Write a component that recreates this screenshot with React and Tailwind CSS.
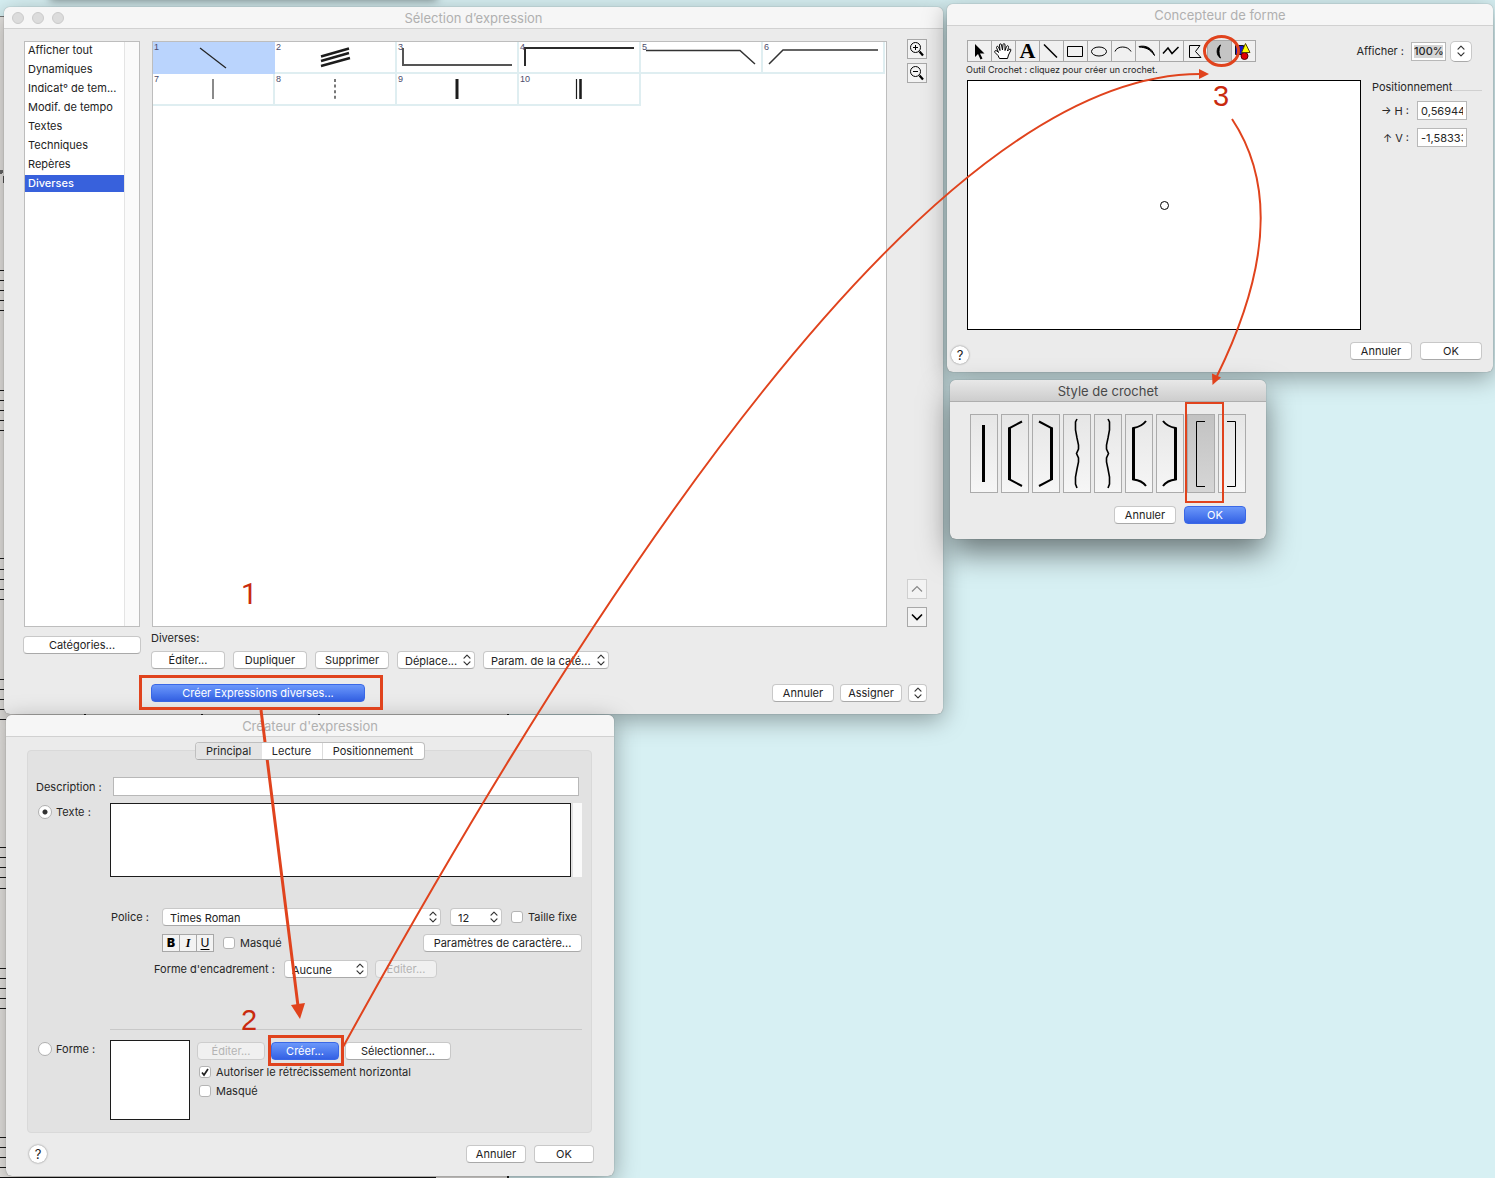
import { useState } from 'react';

const categories = [
  'Afficher tout',
  'Dynamiques',
  'Indicat° de tem...',
  'Modif. de tempo',
  'Textes',
  'Techniques',
  'Repères',
  'Diverses',
];

const expressions = [
  { id: 1, shape: <path d="M47 6 73 26" stroke="#222" strokeWidth="1.2" /> },
  { id: 2, shape: <path d="M46 14.5 74 6.5M46 19 74 11M46 24 75 16" stroke="#1c1c1c" strokeWidth="2.4" /> },
  { id: 3, shape: <path d="M6 6V23H115" stroke="#555" strokeWidth="2" /> },
  { id: 4, shape: <path d="M6 24V6H115" stroke="#2b2b2b" strokeWidth="2" /> },
  { id: 5, shape: <path d="M5 8.5H99L114 22" stroke="#333" strokeWidth="1.5" /> },
  { id: 6, shape: <path d="M6 22 20 8H115" stroke="#333" strokeWidth="1.5" /> },
  { id: 7, shape: <path d="M60 5V25" stroke="#8a8a8a" strokeWidth="2" /> },
  { id: 8, shape: <path d="M60 5V25" stroke="#777" strokeWidth="2" strokeDasharray="3 2.6" /> },
  { id: 9, shape: <path d="M60 5V25" stroke="#1c1c1c" strokeWidth="3" /> },
  { id: 10, shape: <path d="M57.5 5V25M61.5 5V25" stroke="#1c1c1c" strokeWidth="1.2" /> , extra: 61.5 },
];

const tools = [
  {
    name: 'Sélection',
    icon: <path d="M8 4v13l3-3 2.5 5.5 2-1-2.5-5h4.5z" fill="#000" />,
  },
  {
    name: 'Déplacement',
    icon: (
      <path
        d="M8.5 18.5 7 15.500 4 12.500C3 11 4.500 10 6 11L7.500 12.500 5.500 7.500C5.500 6 7 6 7.500 7L9 10.500 8.500 5C8.500 3.500 10.500 3.500 10.500 5L11.500 10 12 4.500C12.500 3 14 3.500 14 5V10.500L15.500 6.500C16.500 5 18 6 17.500 7.500L16.500 11 18 9.500C19.500 8.500 20.500 9.500 19.500 11L17.500 15 16.500 18.500Z"
        fill="#fff"
        stroke="#000"
      />
    ),
  },
  { name: 'Texte', letter: 'A' },
  { name: 'Ligne', icon: <path d="M5 4.500 18 17.500" stroke="#000" strokeWidth="1.5" /> },
  { name: 'Rectangle', icon: <path d="M4.500 6.500h15v10h-15z" stroke="#000" /> },
  { name: 'Ellipse', icon: <ellipse cx="12" cy="11.500" rx="7.500" ry="4.500" stroke="#000" /> },
  { name: 'Arc', icon: <path d="M4 11.500C6 5.500 17 5.500 20 11.500" stroke="#000" /> },
  { name: 'Liaison', icon: <path d="M4 6.500C11 5 17 8 19.500 15.500C15 9 11 7.500 4 7Z" fill="#000" stroke="#000" /> },
  { name: 'Polyligne', icon: <path d="M4 13.500 9 8 13 13.500 19.500 7" stroke="#000" strokeWidth="1.500" /> },
  { name: 'Polygone', icon: <path d="M6.500 5.500H17L12.500 11.500 18 17.500H6.500Z" stroke="#000" /> },
  { name: 'Crochet', icon: <path d="M13.500 5C9 8 9 15 13.500 18C11.500 14 11.500 9 13.500 5Z" fill="#000" stroke="#000" /> },
  {
    name: 'Objets',
    icon: (
      <>
        <path d="M4.500 5.500h8v9h-8z" fill="#1414d2" stroke="#111" />
        <ellipse cx="13.500" cy="16" rx="3.500" ry="3.500" fill="#e00000" stroke="#500" />
        <path d="M14.500 3.500 19 12.500H10.500Z" fill="#ff0" stroke="#554400" />
      </>
    ),
  },
];

const brace = 'M14 5 12.500 8 12.500 16 14 24 15.500 31V35L13.500 39.500 15.500 44V48L14 55 12.500 63V70L14 74';

const brackets = [
  { name: 'Trait', icon: <path d="M13.500 11V68" strokeWidth="3" /> },
  { name: 'Crochet biseauté gauche', icon: <path d="M21 7.500 8.500 14V65.500L21 72" strokeWidth="2" />, bar: 8.5 },
  { name: 'Crochet biseauté droit', icon: <path d="M7 7.500 19.500 14V65.500L7 72" strokeWidth="2" />, bar: 19.5 },
  { name: 'Accolade gauche', icon: <path d={brace} strokeWidth="1.600" /> },
  { name: 'Accolade droite', icon: <path d={brace} strokeWidth="1.600" transform="translate(28 0) scale(-1 1)" /> },
  { name: 'Crochet courbe gauche', icon: <path d="M21 7C18 11 14 13 8.500 14V65.500C14 66 18 68 21 72" strokeWidth="2" />, bar: 8.5 },
  { name: 'Crochet courbe droit', icon: <path d="M7 7C10 11 14 13 19.500 14V65.500C14 66 10 68 7 72" strokeWidth="2" />, bar: 19.5 },
  { name: 'Crochet droit ouvrant', icon: <path d="M18 7.500H9.500V72.500H18" strokeWidth="1" /> },
  { name: 'Crochet droit fermant', icon: <path d="M9 7.500H17.500V72.500H9" strokeWidth="1" /> },
];

const staffLines = [
  270, 280, 290, 300, 310, 390, 400, 410, 420, 430, 558, 569, 579, 589, 599, 679, 689, 699, 709, 719,
  847, 857, 867, 877, 888, 968, 978, 988, 998, 1008, 1137, 1147, 1157, 1167,
];

const Window = ({ title, lights, active, className, children }) => (
  <section
    aria-label={title}
    className={`absolute flex flex-col rounded-md bg-[#ebebeb] ${
      active
        ? 'shadow-[0_0_1px_rgba(0,0,0,0.5),0_14px_30px_rgba(0,0,0,0.5)]'
        : 'shadow-[0_0_1px_rgba(0,0,0,0.5),0_6px_24px_rgba(0,0,0,0.35)]'
    } ${className}`}
  >
    <header
      className={`relative flex h-[22px] items-center justify-center rounded-t-md border-b text-[13px] leading-4 ${
        active
          ? 'border-[#aeaeae] bg-gradient-to-b from-[#e8e8e8] to-[#cdcdcd] text-[#484848]'
          : 'border-[#d1d1d1] bg-[#f6f6f6] text-[#b0b0b0]'
      }`}
    >
      {lights && (
        <div className="absolute left-2 flex gap-2">
          {['Fermer', 'Réduire', 'Agrandir'].map((label) => (
            <button key={label} aria-label={label} className="size-3 rounded-full border border-[#cbcbcb] bg-[#dcdcdc]" />
          ))}
        </div>
      )}
      <h2>{title}</h2>
    </header>
    {children}
  </section>
);

const PushButton = ({ children, primary, dimmed, className }) => {
  let look = 'border-[#c8c8c8] border-b-[#a9a9a9] bg-white text-[#222]';
  if (primary) look = 'border-[#3a68e6] bg-gradient-to-b from-[#6b97fa] to-[#3460e4] text-white';
  if (dimmed) look = 'border-[#cdcdcd] bg-[#f0f0f0] text-[#b4b4b4]';
  return (
    <button
      disabled={dimmed}
      className={`h-[18px] shrink-0 rounded-sm border text-center leading-4 whitespace-nowrap ${look} ${className}`}
    >
      {children}
    </button>
  );
};

const UpDown = () => (
  <svg width="8" height="12" viewBox="0 0 8 12" fill="none" stroke="#333" strokeWidth="1.200" strokeLinecap="round" strokeLinejoin="round">
    <path d="M1 4.200 4 1.200 7 4.200M1 7.800 4 10.800 7 7.800" />
  </svg>
);

const PopUp = ({ label, id, value, className }) => (
  <div className={`relative shrink-0 ${className}`}>
    <select
      id={id}
      aria-label={label}
      className="block h-[18px] w-full appearance-none rounded-sm border border-[#c8c8c8] border-b-[#a9a9a9] bg-white pt-px pl-[7px] leading-4 text-[#222]"
    >
      <option>{value}</option>
    </select>
    <span className="pointer-events-none absolute top-[3px] right-1">
      <UpDown />
    </span>
  </div>
);

const Check = ({ label, checked = false }) => {
  const [on, setOn] = useState(checked);
  return (
    <label className="flex items-center gap-[5px] leading-4">
      <span className="relative flex size-3">
        <input
          type="checkbox"
          checked={on}
          onChange={() => setOn(!on)}
          className="size-3 appearance-none rounded-[3px] border border-[#b4b4b4] bg-white"
        />
        {on && (
          <svg className="pointer-events-none absolute inset-0" width="12" height="12" fill="none" stroke="#222" strokeWidth="1.700">
            <path d="M3 6.500 5 9 9 3" />
          </svg>
        )}
      </span>
      {label}
    </label>
  );
};

const Radio = ({ label, defaultChecked }) => (
  <label className="flex items-center gap-1 leading-[18px]">
    <input
      type="radio"
      name="kind"
      defaultChecked={defaultChecked}
      className="size-[14px] appearance-none rounded-full border border-[#b0b0b0] bg-white checked:bg-[radial-gradient(circle,#333_2px,#fff_3px)]"
    />
    {label}
  </label>
);

const HelpButton = () => (
  <button
    aria-label="Aide"
    className="size-[18px] rounded-full bg-white text-center text-[13px] leading-[18px] text-[#222] shadow-[0_0_2px_rgba(0,0,0,0.5)]"
  >
    ?
  </button>
);

const SquareButton = ({ label, dimmed, children }) => (
  <button
    aria-label={label}
    disabled={dimmed}
    className={`flex size-5 items-center justify-center border bg-[#f3f3f3] ${dimmed ? 'border-[#cfcfcf]' : 'border-[#a8a8a8]'}`}
  >
    {children}
  </button>
);

const Magnifier = ({ sign }) => (
  <svg width="18" height="18" fill="none" stroke="#000">
    <circle cx="7.500" cy="7.500" r="5" />
    <path d={sign} />
    <path d="M11.500 11.500 15 15.500" strokeWidth="2.200" />
  </svg>
);

const ScoreBackground = () => (
  <svg className="pointer-events-none absolute inset-0 h-full w-full" aria-hidden="true" shapeRendering="crispEdges">
    <rect x="0" y="16" width="508" height="1162" fill="#e9e7e4" />
    <path d="M0 16.500H5" stroke="#777" />
    {staffLines.map((y) => (
      <path key={y} d={`M0 ${y}.500H10`} stroke="#1a1a1a" />
    ))}
    <circle cx="1" cy="172" r="2" fill="#666" />
    <path d="M3.500 176V183" stroke="#555" />
    <path d="M0 1177.500H436" stroke="#111" strokeWidth="1" />
    <path d="M84.500 714V716M201.500 714V716M318.500 714V716M508 713V716M508 1176V1178" stroke="#222" strokeWidth="2" />
  </svg>
);

const SelectionWindow = () => {
  const [category, setCategory] = useState('Diverses');
  return (
    <Window title="Sélection d’expression" lights className="top-[7px] left-1 w-[939px]">
      <div className="flex gap-[10px] pt-[10px] pr-4 pb-3 pl-[19px]">
        <div className="flex w-[118px] shrink-0 flex-col gap-[9px] pt-[2px]">
          <div className="mx-px flex h-[586px] border border-[#bdbdbd] bg-white">
            <ul className="flex flex-1 flex-col gap-[2px] border-r border-[#e4e4e4] leading-[17px]">
              {categories.map((name) => (
                <li key={name}>
                  <button
                    onClick={() => setCategory(name)}
                    className={`block h-[17px] w-full pl-[3px] text-left whitespace-nowrap ${
                      name === category ? 'bg-[#3861dc] font-medium text-white' : 'text-[#222]'
                    }`}
                  >
                    {name}
                  </button>
                </li>
              ))}
            </ul>
            <div className="w-[14px] bg-[#fafafa]" />
          </div>
          <PushButton>Catégories...</PushButton>
        </div>

        <div className="flex flex-1 flex-col">
          <div className="flex gap-5">
            <div className="mt-[2px] ml-px h-[586px] flex-1 border border-[#bdbdbd] bg-white">
              <div className="grid grid-cols-[repeat(6,122px)]">
                {expressions.map(({ id, shape, extra }) => (
                  <button
                    key={id}
                    aria-label={`Expression ${id}`}
                    className={`relative h-8 border-r-2 border-b-2 ${id === 1 ? 'border-[#bad4fd] bg-[#bad4fd]' : 'border-[#dfeef1]'}`}
                  >
                    <svg width="120" height="30" fill="none" className="block overflow-visible">
                      {shape}
                      {extra && <path d={`M${extra} 5V25`} stroke="#1c1c1c" strokeWidth="2.500" />}
                    </svg>
                    <span className="absolute top-0 left-px font-['Liberation_Sans'] text-[9px] leading-[10px] text-[#4c4c6c]">{id}</span>
                  </button>
                ))}
              </div>
            </div>
            <div className="flex flex-col">
              <SquareButton label="Zoom avant">
                <Magnifier sign="M5 7.500H10M7.500 5V10" />
              </SquareButton>
              <div className="mt-1">
                <SquareButton label="Zoom arrière">
                  <Magnifier sign="M5 7.500H10" />
                </SquareButton>
              </div>
              <div className="mt-auto flex flex-col gap-2">
                <SquareButton label="Monter" dimmed>
                  <svg width="12" height="8" fill="none" stroke="#8a8a8a" strokeWidth="1.200">
                    <path d="M1 6.500 6 1.500 11 6.500" />
                  </svg>
                </SquareButton>
                <SquareButton label="Descendre">
                  <svg width="12" height="8" fill="none" stroke="#000" strokeWidth="1.600">
                    <path d="M1 1.500 6 6.500 11 1.500" />
                  </svg>
                </SquareButton>
              </div>
            </div>
          </div>
          <p className="mt-1 leading-[14px]">Diverses:</p>
          <div className="mt-[6px] flex gap-2">
            <PushButton className="w-[74px]">Éditer...</PushButton>
            <PushButton className="w-[74px]">Dupliquer</PushButton>
            <PushButton className="w-[74px]">Supprimer</PushButton>
            <PopUp label="Déplacer" value="Déplace..." className="w-[78px]" />
            <PopUp label="Paramètres de la catégorie" value="Param. de la caté..." className="w-[126px]" />
          </div>
          <div className="mt-[15px] flex gap-[6px]">
            <PushButton primary className="mr-auto w-[214px]">Créer Expressions diverses...</PushButton>
            <PushButton className="w-[62px]">Annuler</PushButton>
            <PushButton className="w-[62px]">Assigner</PushButton>
            <button
              aria-label="Autres options"
              className="flex h-[18px] w-[19px] items-center justify-center rounded-sm border border-[#c8c8c8] border-b-[#a9a9a9] bg-white"
            >
              <UpDown />
            </button>
          </div>
        </div>
      </div>
    </Window>
  );
};

const CreatorWindow = () => (
  <Window title="Créateur d'expression" className="top-[715px] left-[6px] w-[608px]">
    <div className="pt-[5px] pr-[22px] pb-[13px] pl-[21px]">
      <div role="tablist" className="relative z-10 flex justify-center">
        <div className="flex h-[18px] overflow-hidden rounded-sm border border-[#bfbfbf] border-b-[#a9a9a9] bg-white leading-4">
          <button role="tab" aria-selected="true" className="w-[66px] bg-[#e4e4e4]">Principal</button>
          <button role="tab" aria-selected="false" className="w-[61px] border-r border-[#dcdcdc]">Lecture</button>
          <button role="tab" aria-selected="false" className="w-[101px]">Positionnement</button>
        </div>
      </div>

      <div className="-mt-[10px] rounded-sm border border-[#d9d9d9] bg-[#e2e2e2] pb-3">
        <div className="flex items-center pt-[26px] pr-3 pl-2">
          <label htmlFor="description" className="w-[77px]">Description :</label>
          <input id="description" className="h-[19px] flex-1 border border-[#b8b8b8] bg-white px-1" />
        </div>

        <div className="mt-[7px] flex pr-[9px] pl-[10px]">
          <div className="w-[72px]">
            <Radio label="Texte :" defaultChecked />
          </div>
          <textarea aria-label="Texte" className="h-[74px] flex-1 resize-none border border-[#1c1c1c] bg-white" />
          <div className="ml-[2px] w-[9px] bg-[#fafafa]" />
        </div>

        <div className="mt-[31px] flex items-center pl-[83px]">
          <label htmlFor="font" className="w-[51px]">Police :</label>
          <PopUp id="font" value="Times Roman" className="mr-[9px] w-[279px]" />
          <PopUp label="Taille" value="12" className="mr-[9px] w-[52px]" />
          <Check label="Taille fixe" />
        </div>

        <div className="mt-2 flex items-center gap-[9px] pr-[9px] pl-[134px]">
          <div className="flex h-[18px] w-[52px] border border-[#a8a8a8] bg-[#f3f3f3] text-[12px] leading-4 text-black">
            <button aria-label="Gras" className="flex-1 border-r border-[#a8a8a8] font-black">B</button>
            <button aria-label="Italique" className="flex-1 border-r border-[#a8a8a8] font-['Liberation_Serif'] font-bold italic">I</button>
            <button aria-label="Souligné" className="flex-1 underline underline-offset-2">U</button>
          </div>
          <Check label="Masqué" />
          <PushButton className="ml-auto w-[159px]">Paramètres de caractère...</PushButton>
        </div>

        <div className="mt-2 flex items-center pl-[126px]">
          <label htmlFor="enclosure" className="w-[130px]">Forme d'encadrement :</label>
          <PopUp id="enclosure" value="Aucune" className="mr-[7px] w-[84px]" />
          <PushButton dimmed className="w-[62px]">Éditer...</PushButton>
        </div>

        <hr className="mt-[51px] mr-[9px] ml-[82px] border-[#c8c8c8]" />

        <div className="mt-[10px] flex pl-[10px]">
          <div className="w-[72px]">
            <Radio label="Forme :" />
          </div>
          <div className="size-20 border border-[#1c1c1c] bg-white" />
          <div className="ml-[7px] flex flex-col pt-[2px]">
            <div className="flex gap-[6px]">
              <PushButton dimmed className="w-[68px]">Éditer...</PushButton>
              <PushButton primary className="w-[68px]">Créer...</PushButton>
              <PushButton className="w-[106px]">Sélectionner...</PushButton>
            </div>
            <div className="mt-1 flex flex-col gap-[3px] pl-[2px]">
              <Check label="Autoriser le rétrécissement horizontal" checked />
              <Check label="Masqué" />
            </div>
          </div>
        </div>
      </div>

      <div className="-mr-[2px] mt-3 flex gap-2 pl-[2px]">
        <div className="mr-auto">
          <HelpButton />
        </div>
        <PushButton className="w-[60px]">Annuler</PushButton>
        <PushButton className="w-[60px]">OK</PushButton>
      </div>
    </div>
  </Window>
);

const ShapeWindow = () => (
  <Window title="Concepteur de forme" className="top-1 left-[947px] w-[546px]">
    <div className="flex items-center pt-[14px] pr-[21px] pl-5">
      <div className="flex border-l border-[#a8a8a8]">
        {tools.map(({ name, icon, letter }) => (
          <button
            key={name}
            aria-label={name}
            className={`flex h-[22px] w-6 items-center justify-center border-y border-r border-[#a8a8a8] ${
              name === 'Crochet' ? 'bg-[#c4c4c4]' : 'bg-[#f0f0f0]'
            }`}
          >
            {letter ? (
              <span className="font-['Liberation_Serif'] text-[22px] leading-5 font-bold text-black">{letter}</span>
            ) : (
              <svg width="23" height="20" viewBox="1 1 23 20" fill="none">
                {icon}
              </svg>
            )}
          </button>
        ))}
      </div>
      <label htmlFor="zoom" className="ml-auto">Afficher :</label>
      <div className="mr-1 ml-[7px] h-[19px] w-[35px] border border-[#b8b8b8] bg-white p-[2px]">
        <input id="zoom" defaultValue="100%" className="block h-[13px] w-full bg-[#d6d6d6] leading-[13px] font-medium" />
      </div>
      <button
        aria-label="Choisir le zoom"
        className="flex h-[21px] w-[22px] items-center justify-center rounded-[5px] border border-[#c8c8c8] border-b-[#a9a9a9] bg-white"
      >
        <UpDown />
      </button>
    </div>
    <p className="mt-[2px] pl-[19px] text-[9px] leading-3">Outil Crochet : cliquez pour créer un crochet.</p>

    <div className="mt-1 flex gap-[11px] pr-[11px] pl-5">
      <div className="flex h-[250px] flex-1 items-center justify-center border border-black bg-white">
        <div className="size-[9px] rounded-full border border-black" />
      </div>
      <div className="w-[110px]">
        <div className="flex items-center leading-[14px]">
          Positionnement
          <span className="mt-[6px] h-px flex-1 bg-[#d0d0d0]" />
        </div>
        <div className="mt-[7px] flex flex-col gap-2 pr-[15px]">
          <div className="flex items-center justify-end gap-2">
            <label htmlFor="pos-h">→ H :</label>
            <input id="pos-h" defaultValue="0,56944" className="h-[19px] w-[50px] border border-[#b8b8b8] bg-white px-[3px]" />
          </div>
          <div className="flex items-center justify-end gap-2">
            <label htmlFor="pos-v">↑ V :</label>
            <input id="pos-v" defaultValue="-1,58333" className="h-[19px] w-[50px] border border-[#b8b8b8] bg-white px-[3px]" />
          </div>
        </div>
      </div>
    </div>

    <div className="mt-3 flex gap-2 pr-[11px] pb-2 pl-1">
      <div className="mt-1 mr-auto">
        <HelpButton />
      </div>
      <PushButton className="w-[62px]">Annuler</PushButton>
      <PushButton className="w-[62px]">OK</PushButton>
    </div>
  </Window>
);

const BracketWindow = () => {
  const [selected, setSelected] = useState(7);
  return (
    <Window title="Style de crochet" active className="top-[380px] left-[950px] w-[316px]">
      <div className="px-5 pt-3 pb-[15px]">
        <div className="flex gap-[3px]">
          {brackets.map(({ name, icon, bar }, i) => (
            <button
              key={name}
              aria-label={name}
              onClick={() => setSelected(i)}
              className={`h-[79px] w-7 border border-[#ababab] bg-gradient-to-b ${
                i === selected ? 'from-[#c2c2c2] to-[#d6d6d6]' : 'from-[#e6e6e6] to-[#f6f6f6]'
              }`}
            >
              <svg width="26" height="77" viewBox="1 1 26 77" fill="none" stroke="#000">
                {icon}
                {bar && <path d={`M${bar} 13.500V66`} strokeWidth="3" />}
              </svg>
            </button>
          ))}
        </div>
        <div className="mt-[13px] flex justify-end gap-2">
          <PushButton className="w-[62px]">Annuler</PushButton>
          <PushButton primary className="w-[62px]">OK</PushButton>
        </div>
      </div>
    </Window>
  );
};

const Annotations = () => (
  <svg className="pointer-events-none absolute inset-0 h-full w-full" fill="none" stroke="#e0431d" strokeWidth="2">
    <rect x="140.500" y="676.500" width="241" height="32" strokeWidth="3" />
    <rect x="269.500" y="1036.500" width="73" height="28" strokeWidth="3" />
    <rect x="1186" y="403" width="37" height="99" />
    <ellipse cx="1221.500" cy="51" rx="17" ry="14.500" strokeWidth="3" />

    <path d="M261 710 298 1006" strokeWidth="3" />
    <path d="M343 1047Q878 74 1200 74" />
    <path d="M1232 119C1266 170 1279 250 1217 376" />
    <g fill="#e0431d" stroke="none">
      <path d="M291 1005 305 1003 300 1019Z" />
      <path d="M1199 69 1209 74 1199 79Z" />
      <path d="M1212 373.500 1221 377.500 1212.500 385Z" />
    </g>

    <g fill="#c92a0e" stroke="none" fontFamily="Liberation Sans, sans-serif" fontSize="29">
      <text x="241" y="604" fontFamily="Roboto, sans-serif">1</text>
      <text x="241" y="1030">2</text>
      <text x="1213" y="106">3</text>
    </g>
  </svg>
);

export default function App() {
  return (
    <main className="relative min-h-screen overflow-hidden bg-[#d7f0f3] font-['Inter',sans-serif] text-[11px] leading-4 text-[#262626]">
      <ScoreBackground />
      <div className="absolute -top-2 left-[50px] h-2 w-[387px] shadow-[0_0_8px_rgba(0,0,0,0.5)]" />
      <SelectionWindow />
      <CreatorWindow />
      <ShapeWindow />
      <BracketWindow />
      <Annotations />
    </main>
  );
}
